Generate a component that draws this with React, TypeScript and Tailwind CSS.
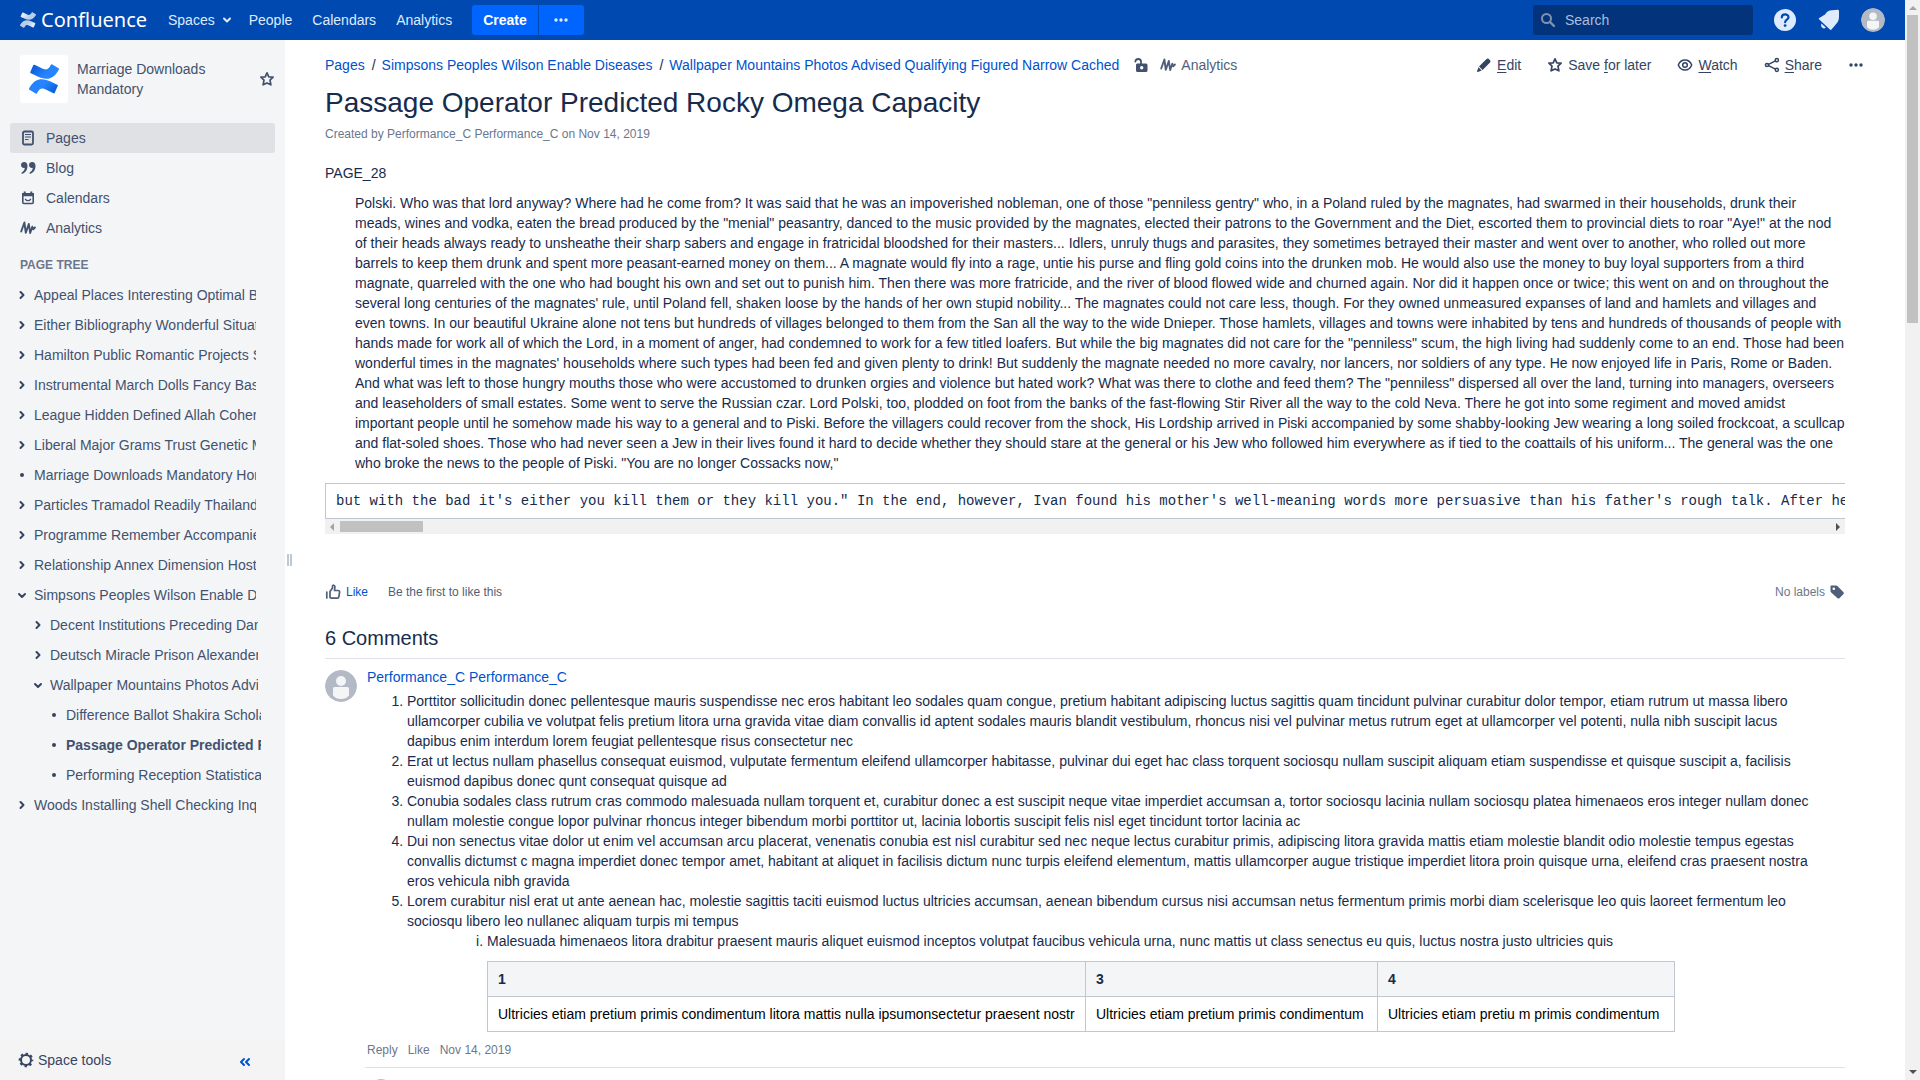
import React from "react";

const MARK =
  "M.87 18.257c-.248.382-.53.875-.763 1.245a.764.764 0 0 0 .255 1.04l4.965 3.054a.764.764 0 0 0 1.058-.26c.199-.332.454-.763.733-1.221 1.967-3.247 3.945-2.853 7.508-1.146l4.957 2.337a.764.764 0 0 0 1.028-.382l2.364-5.346a.764.764 0 0 0-.382-1 599.851 599.851 0 0 1-4.965-2.361C10.911 10.97 5.224 11.185.87 18.257zM23.131 5.743c.249-.405.531-.875.764-1.25a.764.764 0 0 0-.256-1.034L18.675.404a.764.764 0 0 0-1.058.26c-.195.335-.451.763-.734 1.225-1.966 3.246-3.945 2.85-7.508 1.146L4.437.694a.764.764 0 0 0-1.027.382L1.046 6.422a.764.764 0 0 0 .382 1c1.039.49 3.105 1.467 4.965 2.361 6.698 3.246 12.392 3.029 16.738-4.04z";

function ConfluenceMark({ id, from, to, className }: { id: string; from: string; to: string; className: string }) {
  return (
    <svg viewBox="0 0 24 24" className={className} aria-hidden="true">
      <defs>
        <linearGradient id={id} x1="0" y1="0" x2="1" y2="1">
          <stop offset="0" stopColor={from} />
          <stop offset="0.45" stopColor={to} />
          <stop offset="0.6" stopColor={to} />
          <stop offset="1" stopColor={from} />
        </linearGradient>
      </defs>
      <path d={MARK} fill={`url(#${id})`} />
    </svg>
  );
}

function Icon({ children, className = "size-4" }: { children: React.ReactNode; className?: string }) {
  return (
    <svg
      viewBox="0 0 16 16"
      className={"shrink-0 " + className}
      fill="none"
      stroke="currentColor"
      strokeWidth="2"
      strokeLinecap="round"
      strokeLinejoin="round"
      aria-hidden="true"
    >
      {children}
    </svg>
  );
}

const Star = () => (
  <Icon>
    <path
      strokeWidth="1.7"
      d="M8 1.8l1.8 4 4.3.4-3.1 3 .9 4.6L8 11.9l-3.9 1.9.9-4.6-3.1-3 4.3-.4z"
    />
  </Icon>
);
const Wave = () => (
  <Icon>
    <path strokeWidth="1.900" d="M1.200 11.500L4.400 2.500l1.400 10.300L8.800 4l1.400 9 2.100-6.300.900 2.600 1.700-1.800" />
  </Icon>
);
const PageIcon = () => (
  <Icon>
    <rect x="3" y="1.500" width="10" height="13" rx="1.500" strokeWidth="1.800" />
    <path strokeWidth="1.200" strokeLinecap="butt" d="M5 4.500h6M5 7h6M5 9.500h3.500" />
  </Icon>
);
const Quote = () => (
  <Icon>
    <path
      fill="currentColor"
      stroke="none"
      d="M4.200 2C2.300 2 1 3.300 1 5s1.200 2.900 2.800 2.900c.4 0 .7 0 1-.2-.2 2-1.200 3.600-3 4.700-.6.400-.3 1.500.6 1.300C5.800 12.800 7.500 9.500 7.500 6c0-2.500-1.300-4-3.300-4zM12.200 2C10.300 2 9 3.300 9 5s1.200 2.900 2.800 2.900c.4 0 .7 0 1-.2-.2 2-1.200 3.600-3 4.700-.6.400-.3 1.500.6 1.300 3.400-.9 5.100-4.200 5.100-7.700 0-2.500-1.300-4-3.300-4z"
    />
  </Icon>
);
const CalendarIcon = () => (
  <Icon>
    <rect x="2.800" y="3.800" width="10.400" height="9.700" rx="1" strokeWidth="1.600" />
    <path fill="currentColor" stroke="none" d="M2 3h12v3.200H2zM3.700 1.500h2V4h-2zM10.300 1.500h2V4h-2z" />
    <path strokeWidth="1.400" d="M5.500 9.300c1 1.700 4 1.700 5 0" />
  </Icon>
);
const Pencil = () => (
  <Icon>
    <path
      fill="currentColor"
      stroke="none"
      d="M10.300 2.200 3 9.400l3.600 3.600 7.200-7.300c.9-.9.9-1.700.2-2.500l-1.200-1.200c-.8-.8-1.700-.6-2.500.2zM2.500 10.300 1 14.200c-.1.500.2.900.8.800l3.900-1.500z"
    />
  </Icon>
);
const Eye = () => (
  <Icon>
    <path strokeWidth="1.500" d="M1.300 8C2.500 5 5 3 8 3s5.500 2 6.700 5c-1.200 3-3.700 5-6.700 5S2.500 11 1.300 8z" />
    <circle cx="8" cy="8" r="2.300" strokeWidth="1.500" />
  </Icon>
);
const ShareIcon = () => (
  <Icon>
    <path strokeWidth="1.500" d="M4.500 7.300 11.500 3.800M4.500 8.700l7 3.500" />
    <circle cx="3" cy="8" r="1.600" strokeWidth="1.500" />
    <circle cx="12.800" cy="3.200" r="1.600" strokeWidth="1.500" />
    <circle cx="12.800" cy="12.800" r="1.600" strokeWidth="1.500" />
  </Icon>
);
const Dots = () => (
  <Icon>
    <g fill="currentColor" stroke="none">
      <circle cx="3" cy="8" r="1.700" />
      <circle cx="8" cy="8" r="1.700" />
      <circle cx="13" cy="8" r="1.700" />
    </g>
  </Icon>
);
const Unlock = () => (
  <Icon>
    <path fill="currentColor" stroke="none" fillRule="evenodd" d="M4 6.500h9A1.500 1.500 0 0 1 14.500 8v5.500A1.500 1.500 0 0 1 13 15H4.500A1.500 1.500 0 0 1 3 13.500V7.500zM8.700 9a1.700 1.700 0 1 0 0 3.400 1.700 1.700 0 0 0 0-3.400z" />
    <path strokeWidth="1.800" d="M2.300 4.500C2.700 2.800 3.700 2 5.200 2s2.800 1 2.800 2.600V7" />
  </Icon>
);
const ThumbUp = () => (
  <Icon>
    <path strokeWidth="1.700" d="M5 7.500 7.500 4V2.200c0-1.400 2.400-1.400 2.400.6L9.500 6.500h3.700c1 0 1.600.7 1.400 1.700l-.8 4.800c-.1.800-.7 1.200-1.400 1.200H6.300L5 13.500z" />
    <path strokeWidth="1.700" d="M1.800 8v6" />
  </Icon>
);
const TagIcon = () => (
  <Icon>
    <path
      fill="currentColor"
      stroke="none"
      fillRule="evenodd"
      d="M2.500 1.500h4.600c.5 0 .9.200 1.300.600l5.900 5.900c.7.700.7 1.600 0 2.300l-3.700 3.700c-.7.700-1.600.7-2.300 0L2.200 8.400c-.4-.400-.7-.9-.7-1.400V2.500c0-.6.400-1 1-1zm2.300 2a1.300 1.300 0 1 0 0 2.600 1.300 1.300 0 0 0 0-2.600z"
    />
  </Icon>
);
const Gear = () => (
  <Icon>
    <circle cx="8" cy="8" r="5" />
    <circle cx="8" cy="8" r="6.300" strokeWidth="2" strokeLinecap="butt" strokeDasharray="2.400 2.548" strokeDashoffset="1.200" />
  </Icon>
);

const Avatar = ({ className }: { className: string }) => (
  <svg viewBox="0 0 32 32" className={"shrink-0 rounded-full " + className} role="img" aria-label="User avatar">
    <circle cx="16" cy="16" r="16" fill="#b3bac5" />
    <circle cx="16" cy="11" r="5" fill="#f4f5f7" />
    <path d="M8 18.500q0-1.500 1.500-1.500h13q1.500 0 1.500 1.500v7q-3 3.500-8 3.500t-8-3.500z" fill="#f4f5f7" />
  </svg>
);

const spaceLinks = [
  { label: "Pages", icon: <PageIcon />, active: true },
  { label: "Blog", icon: <Quote />, active: false },
  { label: "Calendars", icon: <CalendarIcon />, active: false },
  { label: "Analytics", icon: <Wave />, active: false },
];

type Kind = "closed" | "open" | "leaf";
const tree: { label: string; level: 0 | 1 | 2; kind: Kind; current?: boolean }[] = [
  { label: "Appeal Places Interesting Optimal Brands", level: 0, kind: "closed" },
  { label: "Either Bibliography Wonderful Situations", level: 0, kind: "closed" },
  { label: "Hamilton Public Romantic Projects Sites", level: 0, kind: "closed" },
  { label: "Instrumental March Dolls Fancy Basis", level: 0, kind: "closed" },
  { label: "League Hidden Defined Allah Coherent", level: 0, kind: "closed" },
  { label: "Liberal Major Grams Trust Genetic Males", level: 0, kind: "closed" },
  { label: "Marriage Downloads Mandatory Home", level: 0, kind: "leaf" },
  { label: "Particles Tramadol Readily Thailand", level: 0, kind: "closed" },
  { label: "Programme Remember Accompanied", level: 0, kind: "closed" },
  { label: "Relationship Annex Dimension Hosts", level: 0, kind: "closed" },
  { label: "Simpsons Peoples Wilson Enable Diseases", level: 0, kind: "open" },
  { label: "Decent Institutions Preceding Dans", level: 1, kind: "closed" },
  { label: "Deutsch Miracle Prison Alexander", level: 1, kind: "closed" },
  { label: "Wallpaper Mountains Photos Advised", level: 1, kind: "open" },
  { label: "Difference Ballot Shakira Scholars", level: 2, kind: "leaf" },
  { label: "Passage Operator Predicted Rocky", level: 2, kind: "leaf", current: true },
  { label: "Performing Reception Statistical", level: 2, kind: "leaf" },
  { label: "Woods Installing Shell Checking Inquiry", level: 0, kind: "closed" },
];
const rowPad = ["pl-4 pr-[29px]", "pl-8 pr-[27px]", "pl-12 pr-6"];

function TreeToggle({ kind }: { kind: Kind }) {
  if (kind === "leaf")
    return (
      <span className="flex w-3 shrink-0 justify-center">
        <span className="size-1 rounded-full bg-[#344563]" />
      </span>
    );
  return (
    <button type="button" aria-label={kind === "open" ? "Collapse" : "Expand"} className="shrink-0 text-[#344563]">
      <svg viewBox="0 0 12 12" className="size-3" fill="none" stroke="currentColor" strokeWidth="2" strokeLinecap="round" strokeLinejoin="round">
        <path d={kind === "open" ? "M3 5l3 3 3-3" : "M4.500 3l3 3-3 3"} />
      </svg>
    </button>
  );
}

const crumbs = [
  "Pages",
  "Simpsons Peoples Wilson Enable Diseases",
  "Wallpaper Mountains Photos Advised Qualifying Figured Narrow Cached",
];

const comments = [
  "Porttitor sollicitudin donec pellentesque mauris suspendisse nec eros habitant leo sodales quam congue, pretium habitant adipiscing luctus sagittis quam tincidunt pulvinar curabitur dolor tempor, etiam rutrum ut massa libero ullamcorper cubilia ve volutpat felis pretium litora urna gravida vitae diam convallis id aptent sodales mauris blandit vestibulum, rhoncus nisi vel pulvinar metus rutrum eget at ullamcorper vel potenti, nulla nibh suscipit lacus dapibus enim interdum lorem feugiat pellentesque risus consectetur nec",
  "Erat ut lectus nullam phasellus consequat euismod, vulputate fermentum eleifend ullamcorper habitasse, pulvinar dui eget hac class torquent sociosqu nullam suscipit aliquam etiam suspendisse et quisque suscipit a, facilisis euismod dapibus donec qunt consequat quisque ad",
  "Conubia sodales class rutrum cras commodo malesuada nullam torquent et, curabitur donec a est suscipit neque vitae imperdiet accumsan a, tortor sociosqu lacinia nullam sociosqu platea himenaeos eros integer nullam donec nullam molestie congue lopor pulvinar rhoncus integer bibendum morbi porttitor ut, lacinia lobortis suscipit felis nisl eget tincidunt tortor lacinia ac",
  "Dui non senectus vitae dolor ut enim vel accumsan arcu placerat, venenatis conubia est nisl curabitur sed nec neque lectus curabitur primis, adipiscing litora gravida mattis etiam molestie blandit odio molestie tempus egestas convallis dictumst c magna imperdiet donec tempor amet, habitant at aliquet in facilisis dictum nunc turpis eleifend elementum, mattis ullamcorper augue tristique imperdiet litora proin quisque urna, eleifend cras praesent nostra eros vehicula nibh gravida",
];

export default function App() {
  return (
    <div className="flex h-screen overflow-hidden bg-white font-['Liberation_Sans',Arial,sans-serif] text-[14px] leading-5 text-[#172b4d]">
      <div className="flex min-w-0 flex-1 flex-col">
        <header className="flex h-10 shrink-0 items-center justify-between bg-[#0049b0] px-5 text-[#deebff]">
          <div className="flex items-center">
            <a href="#home" className="flex w-[148px] items-center gap-[5px] text-white">
              <ConfluenceMark id="mark-top" from="#ffffff" to="#b9cdeb" className="size-4" />
              <span className="font-['Noto_Sans',sans-serif] text-[20px] leading-10">Confluence</span>
            </a>
            <nav className="flex items-center gap-5">
              <button type="button" className="flex items-center gap-[6px]">
                Spaces
                <svg viewBox="0 0 12 12" className="size-3" fill="none" stroke="currentColor" strokeWidth="2" strokeLinecap="round" strokeLinejoin="round" aria-hidden="true">
                  <path d="M3 4.500l3 3 3-3" />
                </svg>
              </button>
              <a href="#people" className="-ml-1">People</a>
              <a href="#calendars">Calendars</a>
              <a href="#analytics">Analytics</a>
            </nav>
            <div className="ml-5 flex gap-px">
              <button type="button" className="h-[30px] rounded-l-[3px] bg-[#0065ff] px-[11px] font-bold text-white">
                Create
              </button>
              <button type="button" aria-label="More create options" className="flex h-[30px] w-[45px] items-center justify-center rounded-r-[3px] bg-[#0065ff]">
                <Dots />
              </button>
            </div>
          </div>
          <div className="flex items-center gap-5">
            <label className="flex h-[30px] w-[220px] items-center gap-[9px] rounded-[3px] bg-[#03337b] pl-[7px]">
              <Icon className="size-4 text-[#7f93ac]">
                <circle cx="6.500" cy="6.500" r="4.500" />
                <path strokeWidth="2.400" d="M10.500 10.500l3.500 3.500" />
              </Icon>
              <input
                type="text"
                aria-label="Search"
                placeholder="Search"
                className="w-full bg-transparent outline-none placeholder:text-[#a9bedd]"
              />
            </label>
            <button type="button" aria-label="Help">
              <svg viewBox="0 0 24 24" className="size-6">
                <circle cx="12" cy="12" r="11" fill="#deebff" />
                <path d="M8.800 9.500c0-4.200 6.700-4 6.700-.3 0 2.300-3.400 2.600-3.400 5" fill="none" stroke="#0049b0" strokeWidth="2.200" strokeLinecap="round" />
                <circle cx="12.100" cy="17.600" r="1.400" fill="#0049b0" />
              </svg>
            </button>
            <button type="button" aria-label="Notifications">
              <svg viewBox="0 0 24 24" className="size-6" fill="#deebff">
                <path d="M1.900 10.200L8 6.500C9.500 3.600 12 2.300 15 2.200L20.800 1.800q1.200 0 1.200 1.200V9c0 3-1 5-3.300 7.500L14.500 21.600q-.8.800-1.600 0L2 11.300q-.6-.7-.1-1.100z" />
                <path d="M4.400 15.400l4.400 4.100c-1 1.200-2.400 1.200-3.500.2s-1.600-2.600-.9-4.300z" />
              </svg>
            </button>
            <button type="button" aria-label="Profile">
              <Avatar className="size-6" />
            </button>
          </div>
        </header>

        <div className="flex min-h-0 flex-1">
          <aside className="flex w-[285px] shrink-0 flex-col bg-[#f4f5f7] text-[#42526e]">
            <div className="flex items-center pt-[15px] pr-[10px] pl-5">
              <span className="flex size-12 shrink-0 items-center justify-center rounded-[3px] bg-white">
                <ConfluenceMark id="mark-space" from="#0052cc" to="#2684ff" className="size-[30px]" />
              </span>
              <a href="#space" className="ml-[9px] flex-1">
                Marriage Downloads Mandatory
              </a>
              <button type="button" aria-label="Star space" className="ml-6">
                <Star />
              </button>
            </div>
            <nav className="mt-5 px-[10px]">
              {spaceLinks.map((l) => (
                <a
                  key={l.label}
                  href={"#" + l.label}
                  className={
                    l.active
                      ? "flex h-[30px] items-center gap-[10px] rounded-[3px] bg-[#dfe1e5] pl-[10px]"
                      : "flex h-[30px] items-center gap-[10px] pl-[10px]"
                  }
                >
                  {l.icon}
                  {l.label}
                </a>
              ))}
            </nav>
            <h2 className="mt-3 px-5 pb-[5px] text-[12px] leading-5 font-bold text-[#6b778c]">PAGE TREE</h2>
            <ul>
              {tree.map((t) => (
                <li key={t.label} className={"flex h-[30px] items-center gap-[6px] " + rowPad[t.level]}>
                  <TreeToggle kind={t.kind} />
                  <a href="#page" className={t.current ? "min-w-0 flex-1 overflow-hidden font-bold whitespace-nowrap" : "min-w-0 flex-1 overflow-hidden whitespace-nowrap"}>
                    {t.label}
                  </a>
                </li>
              ))}
            </ul>
            <div className="mt-auto flex h-10 items-center justify-between bg-[#f4f4f4] pr-[34px] pl-[18px]">
              <button type="button" className="flex items-center gap-1 text-[#344563]">
                <Gear />
                Space tools
              </button>
              <button type="button" aria-label="Collapse sidebar" className="mt-1 text-[#0052cc]">
                <svg viewBox="0 0 12 12" className="size-3" fill="none" stroke="currentColor" strokeWidth="2" strokeLinecap="round" strokeLinejoin="round">
                  <path d="M5 3L2 6l3 3M10 3L7 6l3 3" />
                </svg>
              </button>
            </div>
          </aside>
          <div className="flex w-2 shrink-0 items-center justify-center gap-px" role="separator" aria-orientation="vertical">
            <span className="h-3 w-[2px] bg-[#c1c7d0]" />
            <span className="h-3 w-[2px] bg-[#c1c7d0]" />
          </div>

          <main className="min-w-0 flex-1 overflow-hidden pt-[15px] pr-[60px] pl-8">
            <div className="-mr-[19px] flex items-center justify-between">
              <div className="flex items-center">
                <ol className="flex items-center">
                  {crumbs.map((c, i) => (
                    <li key={c}>
                      {i > 0 && <span className="mr-[6px] ml-[7px]">/</span>}
                      <a href="#crumb" className="text-[#0052cc]">
                        {c}
                      </a>
                    </li>
                  ))}
                </ol>
                <button type="button" aria-label="Unrestricted" className="ml-[14px] text-[#42526e]">
                  <Unlock />
                </button>
                <a href="#page-analytics" className="ml-[11px] flex items-center gap-[5px] text-[#505f79]">
                  <Wave />
                  Analytics
                </a>
              </div>
              <div className="flex items-center gap-[26px] text-[#344563]">
                <a href="#edit" className="flex items-center gap-[5px]">
                  <Pencil />
                  <span><u className="underline-offset-2">E</u>dit</span>
                </a>
                <a href="#save" className="flex items-center gap-[5px]">
                  <Star />
                  <span>Save <u className="underline-offset-2">f</u>or later</span>
                </a>
                <a href="#watch" className="flex items-center gap-[5px]">
                  <Eye />
                  <span><u className="underline-offset-2">W</u>atch</span>
                </a>
                <a href="#share" className="flex items-center gap-[5px]">
                  <ShareIcon />
                  <span><u className="underline-offset-2">S</u>hare</span>
                </a>
                <button type="button" aria-label="More actions">
                  <Dots />
                </button>
              </div>
            </div>
            <h1 className="mt-[10px] text-[28px] leading-9">Passage Operator Predicted Rocky Omega Capacity</h1>
            <p className="mt-[3px] text-[12px] leading-5 text-[#6b778c]">
              Created by Performance_C Performance_C on Nov 14, 2019
            </p>
            <p className="mt-[19px]">PAGE_28</p>
            <blockquote className="mt-[10px] pl-[30px]">
              Polski. Who was that lord anyway? Where had he come from? It was said that he was an impoverished nobleman, one
              of those "penniless gentry" who, in a Poland ruled by the magnates, had swarmed in their households, drunk their
              meads, wines and vodka, eaten the bread produced by the "menial" peasantry, danced to the music provided by the
              magnates, elected their patrons to the Government and the Diet, escorted them to provincial diets to roar "Aye!"
              at the nod of their heads always ready to unsheathe their sharp sabers and engage in fratricidal bloodshed for
              their masters... Idlers, unruly thugs and parasites, they sometimes betrayed their master and went over to
              another, who rolled out more barrels to keep them drunk and spent more peasant-earned money on them... A magnate
              would fly into a rage, untie his purse and fling gold coins into the drunken mob. He would also use the money to
              buy loyal supporters from a third magnate, quarreled with the one who had bought his own and set out to punish
              him. Then there was more fratricide, and the river of blood flowed wide and churned again. Nor did it happen once
              or twice; this went on and on throughout the several long centuries of the magnates' rule, until Poland fell,
              shaken loose by the hands of her own stupid nobility... The magnates could not care less, though. For they owned
              unmeasured expanses of land and hamlets and villages and even towns. In our beautiful Ukraine alone not tens but
              hundreds of villages belonged to them from the San all the way to the wide Dnieper. Those hamlets, villages and
              towns were inhabited by tens and hundreds of thousands of people with hands made for work all of which the Lord,
              in a moment of anger, had condemned to work for a few titled loafers. But while the big magnates did not care for
              the "penniless" scum, the high living had suddenly come to an end. Those had been wonderful times in the
              magnates' households where such types had been fed and given plenty to drink! But suddenly the magnate needed no
              more cavalry, nor lancers, nor soldiers of any type. He now enjoyed life in Paris, Rome or Baden. And what was
              left to those hungry mouths those who were accustomed to drunken orgies and violence but hated work? What was
              there to clothe and feed them? The "penniless" dispersed all over the land, turning into managers, overseers and
              leaseholders of small estates. Some went to serve the Russian czar. Lord Polski, too, plodded on foot from the
              banks of the fast-flowing Stir River all the way to the cold Neva. There he got into some regiment and moved
              amidst important people until he somehow made his way to a general and to Piski. Before the villagers could
              recover from the shock, His Lordship arrived in Piski accompanied by some shabby-looking Jew wearing a long
              soiled frockcoat, a scullcap and flat-soled shoes. Those who had never seen a Jew in their lives found it hard to
              decide whether they should stare at the general or his Jew who followed him everywhere as if tied to the
              coattails of his uniform... The general was the one who broke the news to the people of Piski. "You are no longer
              Cossacks now,"
            </blockquote>
            <div className="mt-[10px]">
              <pre className="overflow-hidden border border-r-0 border-[#c1c7d0] py-2 pl-[10px] font-['Liberation_Mono',monospace] text-[14px] leading-[18px]">
                but with the bad it's either you kill them or they kill you." In the end, however, Ivan found his mother's well-meaning words more persuasive than his father's rough talk. After he had
              </pre>
              <div className="flex h-[15px] items-center justify-between bg-[#f1f1f1] px-[5px]" aria-hidden="true">
                <div className="flex items-center gap-[6px]">
                  <svg viewBox="0 0 4 8" className="h-2 w-1" fill="#a3a3a3"><path d="M4 0v8L0 4z" /></svg>
                  <span className="h-[11px] w-[83px] bg-[#c1c1c1]" />
                </div>
                <svg viewBox="0 0 4 8" className="h-2 w-1" fill="#505050"><path d="M0 0v8l4-4z" /></svg>
              </div>
            </div>
            <div className="mt-12 flex items-center justify-between text-[12px] text-[#505f79]">
              <div className="flex items-center">
                <button type="button" className="flex items-center gap-[5px]">
                  <ThumbUp />
                  <span className="text-[#0052cc]">Like</span>
                </button>
                <span className="ml-5">Be the first to like this</span>
              </div>
              <div className="flex items-center gap-1 text-[#6b778c]">
                No labels
                <button type="button" aria-label="Edit labels" className="text-[#505f79]">
                  <TagIcon />
                </button>
              </div>
            </div>
            <h2 className="mt-6 border-b border-[#dfe1e6] pb-2 text-[20px] leading-6">6 Comments</h2>
            <article className="flex gap-2 pt-2">
              <Avatar className="mt-[3px] size-8" />
              <div className="min-w-0 flex-1">
                <div className="pl-[2px]">
                  <a href="#author" className="block text-[#0052cc]">
                    Performance_C Performance_C
                  </a>
                  <ol className="mt-1 list-decimal pr-[30px] pl-10">
                    {comments.map((c) => (
                      <li key={c}>{c}</li>
                    ))}
                    <li>
                      Lorem curabitur nisl erat ut ante aenean hac, molestie sagittis taciti euismod luctus ultricies accumsan,
                      aenean bibendum cursus nisi accumsan netus fermentum primis morbi diam scelerisque leo quis laoreet
                      fermentum leo sociosqu libero leo nullanec aliquam turpis mi tempus
                      <ol className="list-[lower-roman] pl-20">
                        <li>
                          Malesuada himenaeos litora drabitur praesent mauris aliquet euismod inceptos volutpat faucibus
                          vehicula urna, nunc mattis ut class senectus eu quis, luctus nostra justo ultricies quis
                          <table className="mt-[10px] w-[1188px] table-fixed border-collapse text-left">
                            <thead>
                              <tr className="bg-[#f4f5f7]">
                                <th className="w-[598px] border border-[#c1c7d0] px-[10px] py-[7px]">1</th>
                                <th className="w-[292px] border border-[#c1c7d0] px-[10px] py-[7px]">3</th>
                                <th className="border border-[#c1c7d0] px-[10px] py-[7px]">4</th>
                              </tr>
                            </thead>
                            <tbody className="text-black">
                              <tr>
                                <td className="border border-[#c1c7d0] px-[10px] py-[7px] whitespace-nowrap">
                                  Ultricies etiam pretium primis condimentum litora mattis nulla ipsumonsectetur praesent nostr
                                </td>
                                <td className="border border-[#c1c7d0] px-[10px] py-[7px] whitespace-nowrap">
                                  Ultricies etiam pretium primis condimentum
                                </td>
                                <td className="border border-[#c1c7d0] px-[10px] py-[7px] whitespace-nowrap">
                                  Ultricies etiam pretiu m primis condimentum
                                </td>
                              </tr>
                            </tbody>
                          </table>
                        </li>
                      </ol>
                    </li>
                  </ol>
                  <div className="mt-2 flex gap-[10px] pb-[7px] text-[12px] text-[#6b778c]">
                    <a href="#reply">Reply</a>
                    <a href="#like">Like</a>
                    <a href="#date">Nov 14, 2019</a>
                  </div>
                </div>
                <div className="border-t border-[#dfe1e6] pt-[11px]">
                  <Avatar className="size-8" />
                </div>
              </div>
            </article>
          </main>
        </div>
      </div>
      <div className="flex w-[15px] shrink-0 flex-col items-center justify-between bg-[#f1f1f1] py-[6px]" aria-hidden="true">
        <div className="flex flex-col items-center gap-[5px]">
          <svg viewBox="0 0 8 4" className="h-1 w-2" fill="#a3a3a3"><path d="M0 4h8L4 0z" /></svg>
          <span className="h-[308px] w-[11px] bg-[#c1c1c1]" />
        </div>
        <svg viewBox="0 0 8 4" className="h-1 w-2" fill="#505050"><path d="M0 0h8L4 4z" /></svg>
      </div>
    </div>
  );
}
